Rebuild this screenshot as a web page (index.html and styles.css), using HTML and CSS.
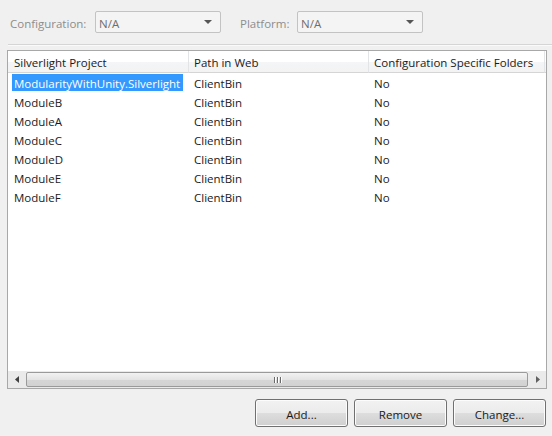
FILE: index.html
```html
<!DOCTYPE html>
<html>
<head>
<meta charset="utf-8">
<link rel="stylesheet" href="styles.css">
</head>
<body>
<div class="dialog">
  <div class="toolbar">
    <span class="lbl lbl-config">Configuration:</span>
    <div class="combo"><span>N/A</span><span class="arrow"></span></div>
    <span class="lbl lbl-platform">Platform:</span>
    <div class="combo"><span>N/A</span><span class="arrow"></span></div>
  </div>
  <div class="sep"></div>
  <div class="listbox">
    <div class="header">
      <div class="hcell c1">Silverlight Project</div>
      <div class="hcell c2">Path in Web</div>
      <div class="hcell c3">Configuration Specific Folders</div>
      <div class="hfill"></div>
    </div>
    <div class="rows">
      <div class="row"><div class="cell c1"><span class="sel">ModularityWithUnity.Silverlight</span></div><div class="cell c2">ClientBin</div><div class="cell c3">No</div></div>
      <div class="row"><div class="cell c1"><span class="txt">ModuleB</span></div><div class="cell c2">ClientBin</div><div class="cell c3">No</div></div>
      <div class="row"><div class="cell c1"><span class="txt">ModuleA</span></div><div class="cell c2">ClientBin</div><div class="cell c3">No</div></div>
      <div class="row"><div class="cell c1"><span class="txt">ModuleC</span></div><div class="cell c2">ClientBin</div><div class="cell c3">No</div></div>
      <div class="row"><div class="cell c1"><span class="txt">ModuleD</span></div><div class="cell c2">ClientBin</div><div class="cell c3">No</div></div>
      <div class="row"><div class="cell c1"><span class="txt">ModuleE</span></div><div class="cell c2">ClientBin</div><div class="cell c3">No</div></div>
      <div class="row"><div class="cell c1"><span class="txt">ModuleF</span></div><div class="cell c2">ClientBin</div><div class="cell c3">No</div></div>
    </div>
    <div class="hscroll">
      <div class="sbtn"><svg width="5" height="7" viewBox="0 0 5 7"><path d="M4 0 L0 3.5 L4 7 Z" fill="#404040"/></svg></div>
      <div class="thumb"><span class="grip"></span><span class="grip"></span><span class="grip"></span></div>
      <div class="sbtn"><svg width="5" height="7" viewBox="0 0 5 7"><path d="M1 0 L5 3.5 L1 7 Z" fill="#606060"/></svg></div>
    </div>
  </div>
  <div class="buttons">
    <button class="btn">Add...</button>
    <button class="btn">Remove</button>
    <button class="btn">Change...</button>
  </div>
</div>
</body>
</html>
```

FILE: styles.css
```css
html, body {
  margin: 0;
  padding: 0;
  background: #f0f0f0;
}
body {
  width: 552px;
  height: 436px;
  overflow: hidden;
  font-family: "Open Sans", "Noto Sans", sans-serif;
  font-size: 11.5px;
  color: #1a1a1a;
}
.dialog {
  display: flex;
  flex-direction: column;
}
.toolbar {
  display: flex;
  align-items: center;
  height: 22px;
  padding: 11px 0 0 10px;
}
.lbl {
  color: #8d8d8d;
  padding-top: 2px;
}
.lbl-config { width: 85px; }
.lbl-platform { width: 57px; margin-left: 19px; }
.combo {
  box-sizing: border-box;
  width: 126px;
  height: 22px;
  border: 1px solid #c3c3c3;
  border-radius: 2px;
  background: #f4f4f4;
  display: flex;
  align-items: center;
  justify-content: space-between;
  padding: 2px 8px 0 3px;
  color: #6f6f6f;
}
.arrow {
  width: 0;
  height: 0;
  border-left: 4px solid transparent;
  border-right: 4px solid transparent;
  border-top: 4px solid #555;
  margin-top: -2px;
}
.sep {
  margin: 11px 0 0 8px;
  height: 0;
  border-top: 1px solid #d5d5d5;
  border-bottom: 1px solid #fafafa;
}
.listbox {
  box-sizing: border-box;
  margin: 4px 0 0 7px;
  width: 540px;
  height: 339px;
  border: 1px solid #a8a8a8;
  background: #fff;
  display: flex;
  flex-direction: column;
}
.header {
  display: flex;
  height: 22px;
  flex: none;
}
.hcell {
  box-sizing: border-box;
  height: 22px;
  line-height: 22px;
  padding-top: 1px;
  padding-left: 6px;
  background: linear-gradient(#ffffff 0%, #ffffff 50%, #f4f5f7 51%, #f3f3f3 100%);
  border-right: 1px solid #e3e4e6;
  border-bottom: 1px solid #d5d5d5;
  white-space: nowrap;
}
.hcell.c2, .hcell.c3 { padding-left: 5px; }
.hfill {
  flex: 1;
  background: linear-gradient(#ffffff 0%, #ffffff 50%, #f4f5f7 51%, #f3f3f3 100%);
  border-bottom: 1px solid #d5d5d5;
}
.c1 { width: 181px; }
.c2 { width: 180px; }
.c3 { width: 176px; }
.rows {
  flex: 1;
}
.row {
  display: flex;
  height: 19px;
  align-items: flex-start;
}
.cell {
  box-sizing: border-box;
  white-space: nowrap;
  height: 19px;
  line-height: 19px;
  padding-top: 1px;
}
.cell.c1 { padding-left: 4px; }
.cell.c2, .cell.c3 { padding-left: 5px; }
.sel {
  display: inline-block;
  vertical-align: top;
  background: #3399ff;
  color: #fff;
  height: 17px;
  line-height: 19px;
  padding: 0 2px;
  width: 171px;
  box-sizing: border-box;
  overflow: hidden;
}
.txt {
  display: inline-block;
  vertical-align: top;
  padding-left: 2px;
  line-height: 19px;
}
.hscroll {
  display: flex;
  height: 17px;
  background: #eaeaea;
  align-items: stretch;
  flex: none;
}
.sbtn {
  width: 18px;
  display: flex;
  align-items: center;
  justify-content: center;
}
.thumb {
  flex: 1;
  box-sizing: border-box;
  margin: 1px 0;
  border: 1px solid #9a9a9a;
  border-radius: 2px;
  background: linear-gradient(#f2f2f2 0%, #e4e4e4 50%, #d6d6d6 51%, #d2d2d2 100%);
  display: flex;
  align-items: center;
  justify-content: center;
  gap: 2px;
}
.grip {
  width: 1px;
  height: 6px;
  background: #6a6a6a;
  box-shadow: 1px 0 0 #ffffff;
}
.buttons {
  display: flex;
  justify-content: flex-end;
  gap: 6px;
  padding: 10px 6px 0 0;
}
.btn {
  box-sizing: border-box;
  width: 93px;
  height: 28px;
  border: 1px solid #707070;
  border-radius: 3px;
  background: linear-gradient(#f2f2f2 0%, #ebebeb 50%, #dddddd 51%, #cfcfcf 100%);
  box-shadow: inset 0 0 0 1px #fcfcfc;
  font-family: "Open Sans", "Noto Sans", sans-serif;
  font-size: 11.5px;
  color: #1a1a1a;
  padding: 2px 0 0 0;
}
```
